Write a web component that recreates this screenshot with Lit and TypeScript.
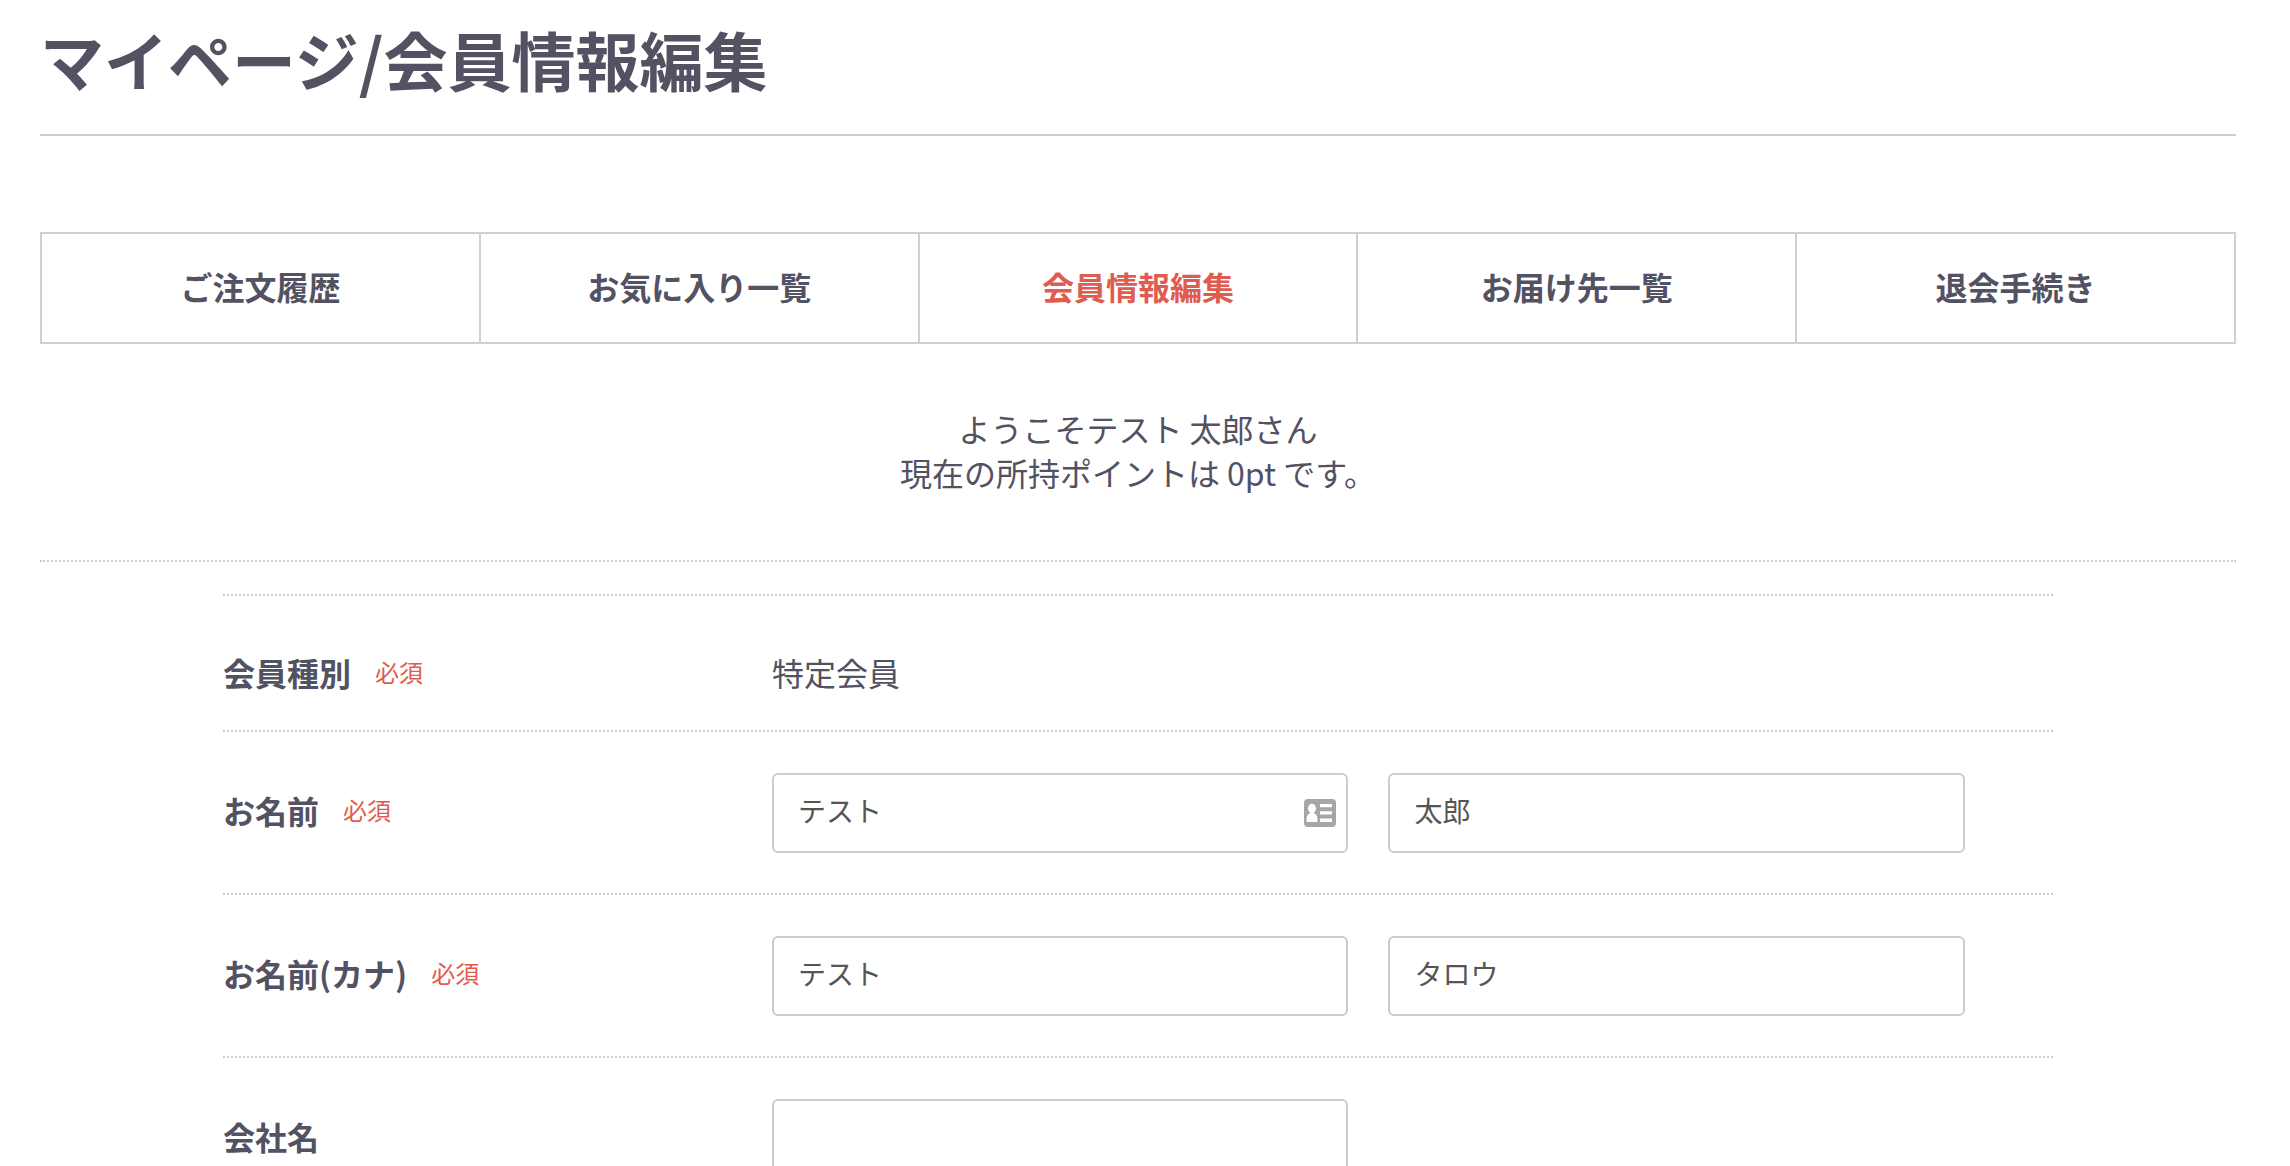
import { LitElement, html, css, nothing } from "lit";
import { customElement, property } from "lit/decorators.js";

interface Tab {
  label: string;
  href: string;
  active?: boolean;
}

interface Field {
  id: string;
  label: string;
  value: string;
  autofill?: boolean;
}

interface Row {
  label: string;
  required: boolean;
  text?: string;
  fields?: Field[];
}

const TABS: Tab[] = [
  { label: "ご注文履歴", href: "#history" },
  { label: "お気に入り一覧", href: "#favorite" },
  { label: "会員情報編集", href: "#change", active: true },
  { label: "お届け先一覧", href: "#delivery" },
  { label: "退会手続き", href: "#withdraw" },
];

const ROWS: Row[] = [
  { label: "会員種別", required: true, text: "特定会員" },
  {
    label: "お名前",
    required: true,
    fields: [
      { id: "name01", label: "姓", value: "テスト", autofill: true },
      { id: "name02", label: "名", value: "太郎" },
    ],
  },
  {
    label: "お名前(カナ)",
    required: true,
    fields: [
      { id: "kana01", label: "セイ", value: "テスト" },
      { id: "kana02", label: "メイ", value: "タロウ" },
    ],
  },
  {
    label: "会社名",
    required: false,
    fields: [{ id: "company", label: "会社名", value: "" }],
  },
];

@customElement("mypage-nav")
export class MypageNav extends LitElement {
  static styles = css`
    :host {
      display: block;
    }
    .list {
      display: grid;
      grid-template-columns: repeat(5, 1fr);
      margin: 0;
      padding: 0;
      list-style: none;
      border: 2px solid #d0d0d0;
      border-left: 0;
    }
    .item {
      border-left: 2px solid #d0d0d0;
    }
    .link {
      display: block;
      padding: 30px 0 34px;
      color: #525263;
      font-weight: 700;
      line-height: 44px;
      text-align: center;
      text-decoration: none;
    }
    .active {
      color: #de5d50;
    }
  `;

  render() {
    return html`
      <nav>
        <ul class="list">
          ${TABS.map(
            (tab) => html`
              <li class="item">
                <a
                  class=${tab.active ? "link active" : "link"}
                  href=${tab.href}
                  aria-current=${tab.active ? "page" : nothing}
                  >${tab.label}</a
                >
              </li>
            `,
          )}
        </ul>
      </nav>
    `;
  }
}

@customElement("profile-row")
export class ProfileRow extends LitElement {
  @property({ attribute: false }) row!: Row;

  static styles = css`
    :host {
      display: block;
      border-bottom: 2px dotted #ccc;
    }
    .row {
      display: grid;
      grid-template-columns: 3fr 7fr;
      align-items: center;
      padding: 41px 0 40px;
    }
    .row.plain {
      padding: 54px 0 36px;
    }
    .head {
      display: flex;
      align-items: center;
      gap: 24px;
      line-height: 44px;
    }
    .row:not(.plain) .head {
      padding-bottom: 6px;
    }
    .label {
      font-weight: 700;
    }
    .required {
      color: #de5d50;
      font-size: 24px;
    }
    .text {
      line-height: 44px;
    }
    .fields {
      display: flex;
      gap: 40px;
    }
    .field {
      position: relative;
      flex: 0 0 45%;
    }
    .input {
      display: block;
      box-sizing: border-box;
      width: 100%;
      height: 80px;
      margin: 0;
      padding: 0 24px 6px;
      border: 2px solid #ccc;
      border-radius: 6px;
      background: #fff;
      color: #555;
      font: inherit;
      font-size: 28px;
    }
    .card {
      position: absolute;
      top: 26px;
      right: 12px;
      width: 32px;
      height: 28px;
    }
  `;

  private card() {
    return html`
      <svg class="card" viewBox="0 0 32 28" aria-hidden="true">
        <rect width="32" height="28" rx="4" fill="#a6a6a6" />
        <ellipse cx="8" cy="9.5" rx="4" ry="4.7" fill="#fff" />
        <path
          d="M2.6 23v-3.200c0-3 1.600-5 3.600-5.800h3.600c2 .8 3.600 2.800 3.600 5.800V23z"
          fill="#fff"
        />
        <path d="M16 5h12v3.300H16zM16 12.200h12v3.400H16zM16 19.500h12V23H16z" fill="#fff" />
      </svg>
    `;
  }

  render() {
    const { label, required, text, fields } = this.row;
    return html`
      <div class=${fields ? "row" : "row plain"}>
        <div class="head">
          ${fields
            ? html`<label class="label" for=${fields[0].id}>${label}</label>`
            : html`<span class="label">${label}</span>`}
          ${required ? html`<span class="required">必須</span>` : nothing}
        </div>
        ${fields
          ? html`<div class="fields">
              ${fields.map(
                (f) => html`
                  <div class="field">
                    <input
                      class="input"
                      type="text"
                      id=${f.id}
                      name=${f.id}
                      aria-label=${f.label}
                      .value=${f.value}
                    />
                    ${f.autofill ? this.card() : nothing}
                  </div>
                `,
              )}
            </div>`
          : html`<div class="text">${text}</div>`}
      </div>
    `;
  }
}

@customElement("app-root")
export class AppRoot extends LitElement {
  static styles = css`
    :host {
      display: block;
      box-sizing: border-box;
      height: 100vh;
      overflow: hidden;
      padding: 0 54px 0 40px;
      background: #fff;
      color: #525263;
      font-family: "Noto Sans CJK JP", sans-serif;
      font-size: 32px;
    }
    .title {
      margin: 0 0 96px;
      padding: 26px 0 44px;
      border-bottom: 2px solid #ccc;
      font-size: 64px;
      font-weight: 700;
      line-height: 64px;
    }
    .welcome {
      margin: 0 0 32px;
      padding: 62px 0 66px;
      border-bottom: 2px dotted #ccc;
      line-height: 44px;
      text-align: center;
    }
    .form {
      width: calc(100% * 5 / 6);
      margin: 0 auto;
      border-top: 2px dotted #ccc;
    }
  `;

  render() {
    return html`
      <main>
        <h1 class="title">マイページ/会員情報編集</h1>
        <mypage-nav></mypage-nav>
        <p class="welcome">
          ようこそテスト 太郎さん<br />現在の所持ポイントは 0pt です。
        </p>
        <form class="form">
          ${ROWS.map((row) => html`<profile-row .row=${row}></profile-row>`)}
        </form>
      </main>
    `;
  }
}
